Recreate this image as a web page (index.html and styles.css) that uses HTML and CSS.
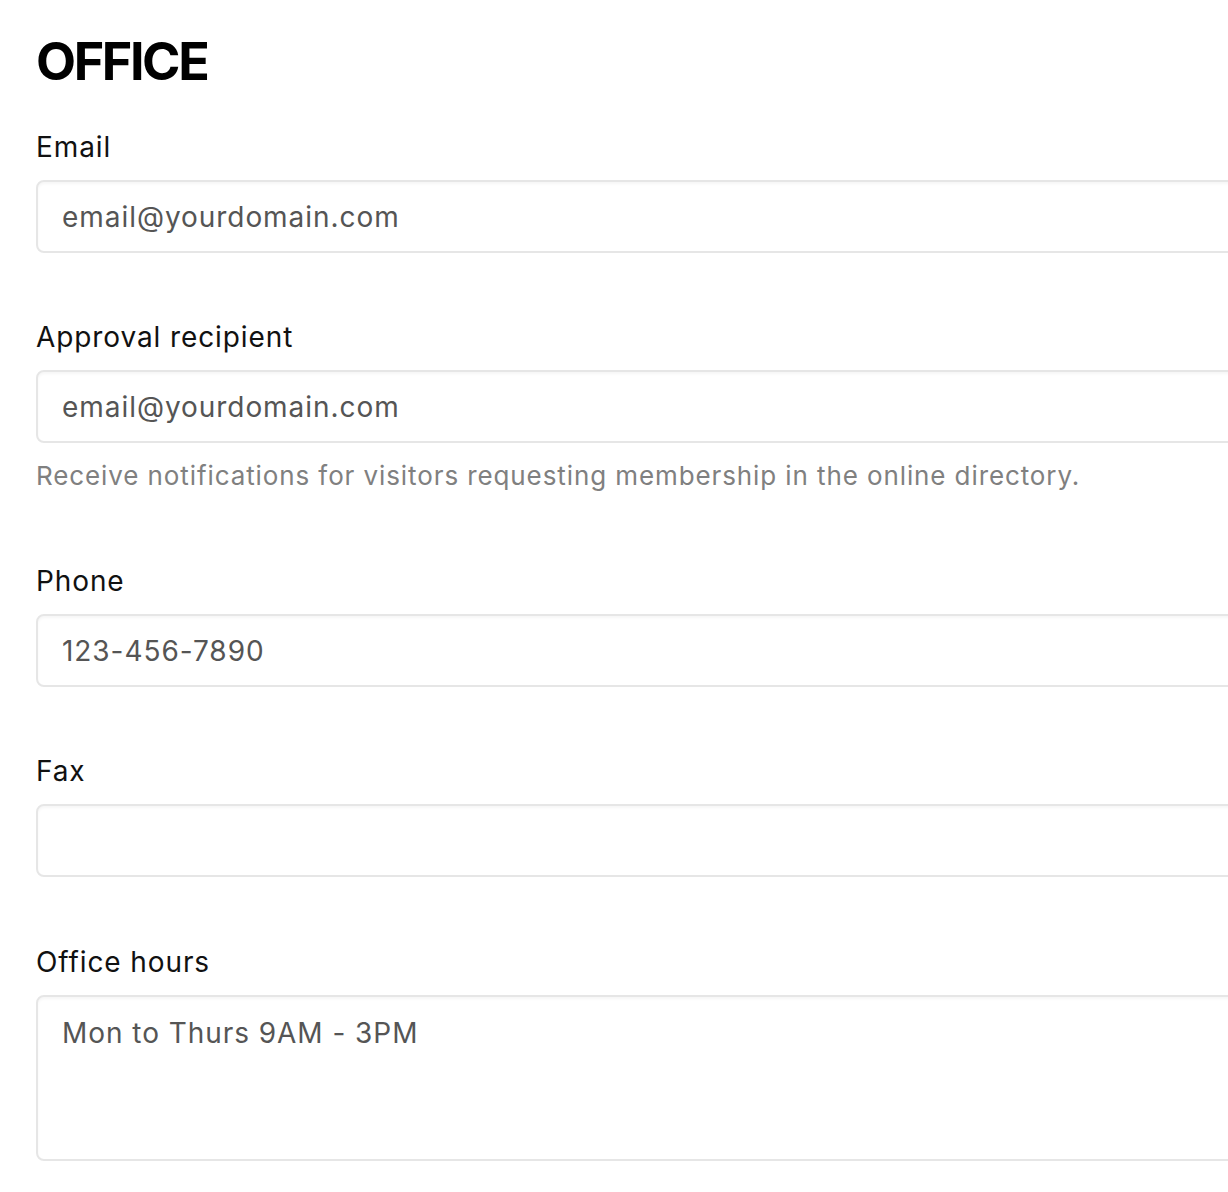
FILE: index.html
```html
<!DOCTYPE html>
<html lang="en">
<head>
    <meta charset="UTF-8">
    <meta name="viewport" content="width=device-width, initial-scale=1.0">
    <title>Office settings</title>
    <link rel="stylesheet" href="styles.css">
</head>
<body>
<div class="container">
    <h1>OFFICE</h1>

    <form id="officeForm">
        <div class="field">
            <label for="email">Email</label>
            <input type="text" id="email" value="email@yourdomain.com">
        </div>

        <div class="field">
            <label for="approval">Approval recipient</label>
            <input type="text" id="approval" value="email@yourdomain.com">
            <p class="help">Receive notifications for visitors requesting membership in the online directory.</p>
        </div>

        <div class="field">
            <label for="phone">Phone</label>
            <input type="text" id="phone" value="123-456-7890">
        </div>

        <div class="field">
            <label for="fax">Fax</label>
            <input type="text" id="fax" value="">
        </div>

        <div class="field">
            <label for="hours">Office hours</label>
            <textarea id="hours">Mon to Thurs 9AM - 3PM</textarea>
        </div>
    </form>
</div>
</body>
</html>
```

FILE: styles.css
```css
* {
    box-sizing: border-box;
    margin: 0;
    padding: 0;
    font-family: Inter, 'Noto Sans', sans-serif;
}

html, body {
    background-color: #fff;
    overflow: hidden;
}

.container {
    width: 1260px;
    padding: 31px 0 0 36px;
}

h1 {
    color: #000;
    font-size: 52px;
    font-weight: 700;
    letter-spacing: -2.4px;
    line-height: 1.2;
    margin-bottom: 33px;
}

.field {
    margin-bottom: 63px;
}

.field:nth-child(4) {
    margin-bottom: 64px;
}

label {
    display: block;
    color: #111;
    font-size: 28px;
    letter-spacing: 0.9px;
    line-height: 42px;
    margin-bottom: 12px;
}

input,
textarea {
    display: block;
    width: 100%;
    border: 2px solid #e6e6e6;
    border-radius: 8px;
    box-shadow: inset 0 2px 3px rgba(0, 0, 0, 0.04);
    background-color: #fff;
    color: #555;
    font-size: 28px;
    letter-spacing: 0.95px;
    line-height: 42px;
    padding: 15px 24px 14px;
    outline: none;
}

input {
    height: 73px;
}

textarea {
    height: 166px;
    resize: none;
}

.help {
    color: #808080;
    font-size: 26px;
    letter-spacing: 0.9px;
    line-height: 43px;
    margin-top: 11px;
}
```
